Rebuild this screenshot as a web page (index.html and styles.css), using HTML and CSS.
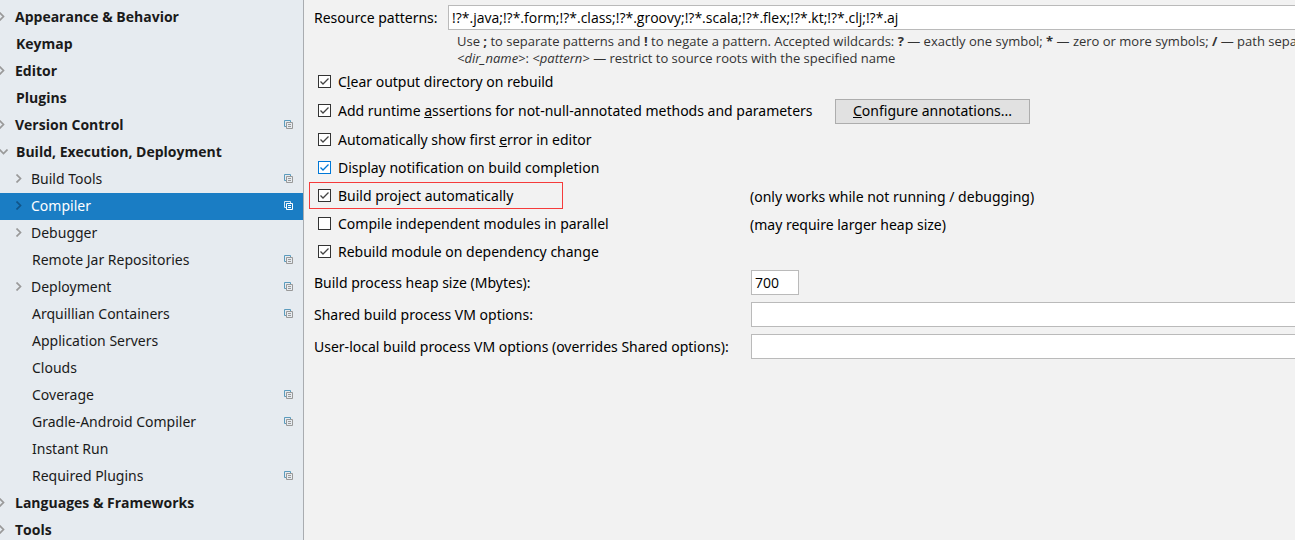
FILE: index.html
```html
<!DOCTYPE html>
<html lang="en">
<head>
    <meta charset="UTF-8">
    <meta name="viewport" content="width=device-width, initial-scale=1.0">
    <title>Settings - Compiler</title>
    <link rel="stylesheet" href="styles.css">
</head>
<body>

    <!-- Shared icons -->
    <svg class="sprite" aria-hidden="true">
        <symbol id="icon-right" viewBox="0 0 6 9">
            <path d="M0.5 0.5 L4.5 4.5 L0.5 8.5" fill="none" stroke="currentColor" stroke-width="1.7"/>
        </symbol>
        <symbol id="icon-down" viewBox="0 0 9 6">
            <path d="M0.5 0.5 L4.5 4.5 L8.5 0.5" fill="none" stroke="currentColor" stroke-width="1.7"/>
        </symbol>
        <symbol id="icon-copy" viewBox="0 0 9 9">
            <path class="copy-back" d="M2 6.5 H0.5 V0.5 H6.5 V2" fill="none"/>
            <path class="copy-front" d="M2.5 2.5 H8.5 V8.5 H2.5 Z M4 4.5 H7 M4 6.5 H7" fill="none"/>
        </symbol>
    </svg>

    <div class="settings">
        <nav class="sidebar">
            <ul class="tree">
                <li><a href="#"><span class="toggle"><svg class="right"><use href="#icon-right"/></svg></span>Appearance &amp; Behavior</a></li>
                <li><a href="#" class="leaf">Keymap</a></li>
                <li><a href="#"><span class="toggle"><svg class="right"><use href="#icon-right"/></svg></span>Editor</a></li>
                <li><a href="#" class="leaf">Plugins</a></li>
                <li><a href="#"><span class="toggle"><svg class="right"><use href="#icon-right"/></svg></span>Version Control<svg class="copy"><use href="#icon-copy"/></svg></a></li>
                <li>
                    <a href="#"><span class="toggle open"><svg class="down"><use href="#icon-down"/></svg></span>Build, Execution, Deployment</a>
                    <ul class="subtree">
                        <li><a href="#"><span class="toggle"><svg class="right"><use href="#icon-right"/></svg></span>Build Tools<svg class="copy"><use href="#icon-copy"/></svg></a></li>
                        <li><a href="#" class="selected"><span class="toggle"><svg class="right"><use href="#icon-right"/></svg></span>Compiler<svg class="copy"><use href="#icon-copy"/></svg></a></li>
                        <li><a href="#"><span class="toggle"><svg class="right"><use href="#icon-right"/></svg></span>Debugger</a></li>
                        <li><a href="#" class="leaf">Remote Jar Repositories<svg class="copy"><use href="#icon-copy"/></svg></a></li>
                        <li><a href="#"><span class="toggle"><svg class="right"><use href="#icon-right"/></svg></span>Deployment<svg class="copy"><use href="#icon-copy"/></svg></a></li>
                        <li><a href="#" class="leaf">Arquillian Containers<svg class="copy"><use href="#icon-copy"/></svg></a></li>
                        <li><a href="#" class="leaf">Application Servers</a></li>
                        <li><a href="#" class="leaf">Clouds</a></li>
                        <li><a href="#" class="leaf">Coverage<svg class="copy"><use href="#icon-copy"/></svg></a></li>
                        <li><a href="#" class="leaf">Gradle-Android Compiler<svg class="copy"><use href="#icon-copy"/></svg></a></li>
                        <li><a href="#" class="leaf">Instant Run</a></li>
                        <li><a href="#" class="leaf">Required Plugins<svg class="copy"><use href="#icon-copy"/></svg></a></li>
                    </ul>
                </li>
                <li><a href="#"><span class="toggle"><svg class="right"><use href="#icon-right"/></svg></span>Languages &amp; Frameworks</a></li>
                <li><a href="#"><span class="toggle"><svg class="right"><use href="#icon-right"/></svg></span>Tools</a></li>
            </ul>
        </nav>

        <main class="panel">
            <div class="patterns">
                <label for="patterns">Resource patterns:</label>
                <input type="text" id="patterns" class="field" value="!?*.java;!?*.form;!?*.class;!?*.groovy;!?*.scala;!?*.flex;!?*.kt;!?*.clj;!?*.aj">
            </div>
            <p class="hint">
                Use <b>;</b> to separate patterns and <b>!</b> to negate a pattern. Accepted wildcards: <b>?</b> — exactly one symbol; <b>*</b> — zero or more symbols; <b>/</b> — path separator;<br>
                <i>&lt;dir_name&gt;</i>: <i>&lt;pattern&gt;</i> — restrict to source roots with the specified name
            </p>

            <!-- Build switches -->
            <div class="check-row">
                <label class="check"><input type="checkbox" checked><span>C<u>l</u>ear output directory on rebuild</span></label>
            </div>
            <div class="check-row with-button">
                <label class="check"><input type="checkbox" checked><span>Add runtime <u>a</u>ssertions for not-null-annotated methods and parameters</span></label>
                <button type="button" class="button"><u>C</u>onfigure annotations...</button>
            </div>
            <div class="check-row">
                <label class="check"><input type="checkbox" checked><span>Automatically show first <u>e</u>rror in editor</span></label>
            </div>
            <div class="check-row">
                <label class="check"><input type="checkbox" class="active" checked><span>Display notification on build completion</span></label>
            </div>
            <div class="check-row with-note">
                <label class="check marked"><input type="checkbox" checked><span>Build project automatically</span></label>
                <span class="note">(only works while not running / debugging)</span>
            </div>
            <div class="check-row with-note">
                <label class="check"><input type="checkbox"><span>Compile independent modules in parallel</span></label>
                <span class="note">(may require larger heap size)</span>
            </div>
            <div class="check-row">
                <label class="check"><input type="checkbox" checked><span>Rebuild module on dependency change</span></label>
            </div>

            <!-- Build process options -->
            <div class="options">
                <label for="heap">Build process heap size (Mbytes):</label>
                <input type="text" id="heap" class="field short" value="700">
                <label for="shared">Shared build process VM options:</label>
                <input type="text" id="shared" class="field">
                <label for="local">User-local build process VM options (overrides Shared options):</label>
                <input type="text" id="local" class="field">
            </div>
        </main>
    </div>

</body>
</html>
```
FILE: styles.css
```css
* {
    box-sizing: border-box;
    margin: 0;
    padding: 0;
}

body {
    font-family: "Noto Sans", "Open Sans", sans-serif;
    font-size: 14px;
    line-height: 20px;
    color: #000;
    background-color: #f2f2f2;
    overflow: hidden;
}

.sprite {
    display: none;
}

.settings {
    display: flex;
    min-height: 100vh;
}

/* Left tree */
.sidebar {
    flex: 0 0 304px;
    padding-top: 4px;
    background-color: #e6ebf0;
    border-right: 1px solid #a9acb0;
}

.tree,
.subtree {
    list-style: none;
}

.tree a {
    display: flex;
    align-items: center;
    height: 27px;
    padding: 0 10px 2px 0;
    color: #1a1a1a;
    font-family: "Open Sans", "Noto Sans", sans-serif;
    font-weight: bold;
    text-decoration: none;
}

.subtree a {
    padding-left: 16px;
    font-family: "Noto Sans", "Open Sans", sans-serif;
    font-weight: normal;
}

.tree .leaf {
    padding-left: 16px;
}

.subtree .leaf {
    padding-left: 32px;
}

.tree .selected {
    color: #fff;
    background-color: #1a7dc4;
}

.toggle {
    display: flex;
    width: 15px;
    color: #999;
}

.toggle.open {
    width: 16px;
}

.tree > li > a .toggle svg {
    margin-left: -1px;
}

.selected .toggle {
    color: #115488;
}

.right {
    width: 6px;
    height: 9px;
}

.down {
    width: 9px;
    height: 6px;
}

.copy {
    --back: #5b9bbd;
    --front: #999;
    width: 9px;
    height: 9px;
    margin-left: auto;
}

.selected .copy {
    --back: #d5e7f5;
    --front: #fff;
}

.copy-back {
    stroke: var(--back);
}

.copy-front {
    stroke: var(--front);
}

/* Right side */
.panel {
    flex: 1;
    min-width: 0;
    padding: 5px 0 0 10px;
    white-space: nowrap;
}

.field {
    width: 100%;
    height: 25px;
    padding: 0 3px;
    border: 1px solid #bababa;
    border-right: 0;
    background-color: #fff;
    font-family: "Open Sans", "Noto Sans", sans-serif;
    font-size: 14px;
    color: #000;
}

.field.short {
    width: 48px;
    border-right: 1px solid #bababa;
}

.patterns {
    display: grid;
    grid-template-columns: 134px 1fr;
    align-items: center;
}

.hint {
    padding: 3px 0 1px 143px;
    font-family: "Open Sans", "Noto Sans", sans-serif;
    font-size: 13px;
    line-height: 17px;
    color: #333;
}

.check-row {
    display: flex;
    align-items: center;
    height: 28px;
}

.check {
    display: flex;
    align-items: center;
    gap: 7px;
    padding-left: 4px;
}

.check input {
    appearance: none;
    width: 13px;
    height: 13px;
    margin-bottom: 1px;
    border: 1px solid #333;
    background: #fff center no-repeat;
}

.check input:checked {
    background-image: url("data:image/svg+xml,%3Csvg xmlns='http://www.w3.org/2000/svg' width='11' height='11'%3E%3Cpath d='M1.5 5.5 L4 8 L9.5 2.5' fill='none' stroke='%23444' stroke-width='1.3'/%3E%3C/svg%3E");
}

.check input.active {
    border-color: #0078d7;
}

.check input.active:checked {
    background-image: url("data:image/svg+xml,%3Csvg xmlns='http://www.w3.org/2000/svg' width='11' height='11'%3E%3Cpath d='M1.5 5.5 L4 8 L9.5 2.5' fill='none' stroke='%230078d7' stroke-width='1.3'/%3E%3C/svg%3E");
}

.with-button {
    display: grid;
    grid-template-columns: 521px 195px;
    height: 30px;
}

.button {
    height: 25px;
    border: 1px solid #adadad;
    background-color: #e1e1e1;
    font: inherit;
    color: #000;
}

.with-note {
    display: grid;
    grid-template-columns: 436px 1fr;
}

.note {
    padding-top: 2px;
}

/* Red frame round the important option */
.marked {
    align-self: start;
    width: 254px;
    height: 27px;
    margin-left: -5px;
    padding-left: 8px;
    border: 1px solid #f53b3b;
}

.options {
    display: grid;
    grid-template-columns: 437px 1fr;
    row-gap: 7px;
    align-items: center;
    padding-top: 4px;
}
```
